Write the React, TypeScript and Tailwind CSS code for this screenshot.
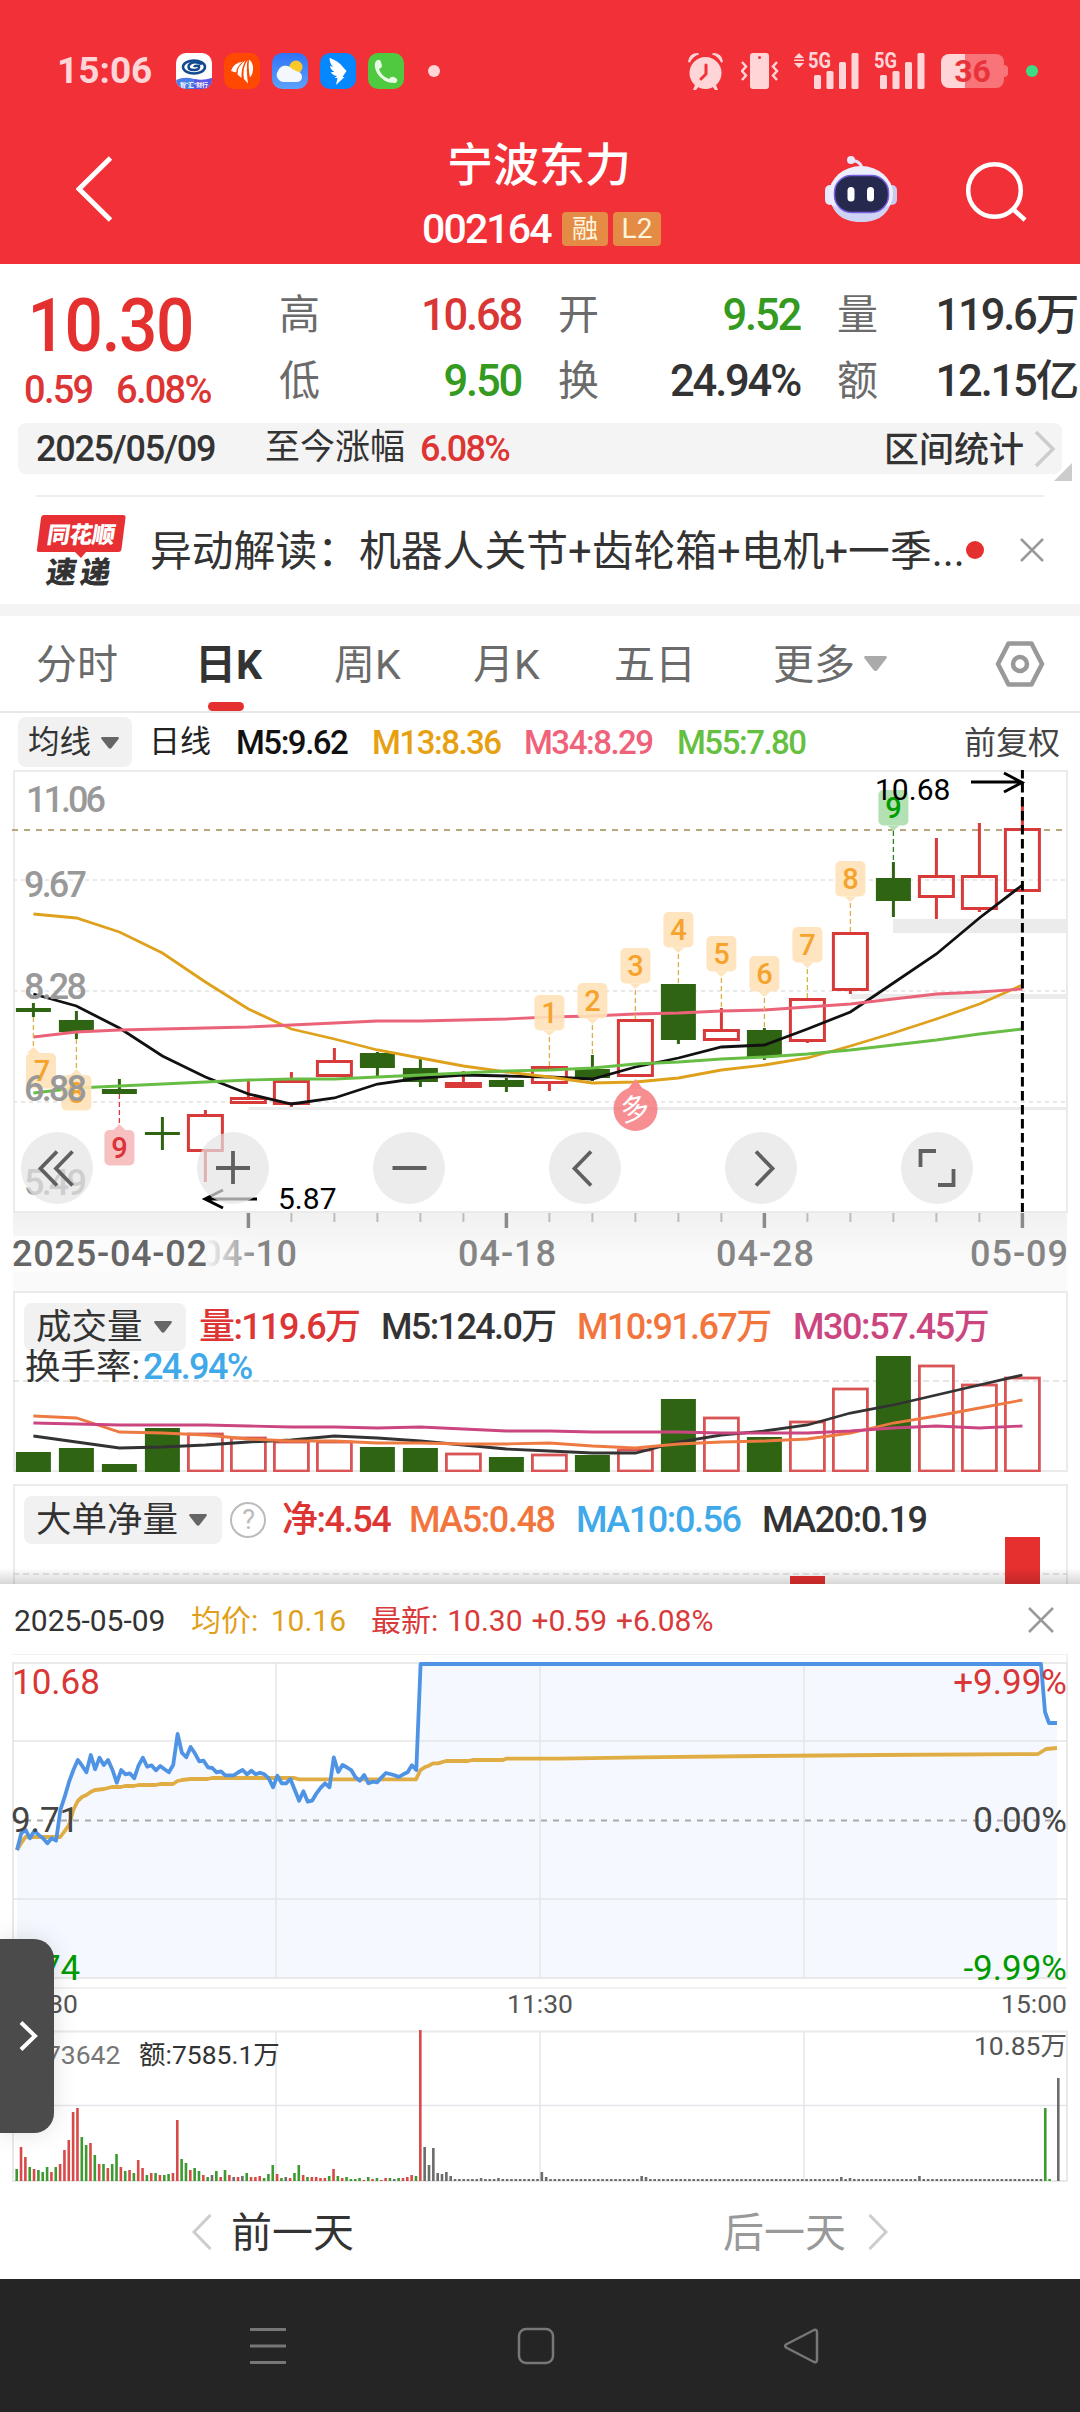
import type { ReactNode } from "react";

const PITCH = 43;
const cx = (i: number) => 33.4 + PITCH * i;
const line = (ys: number[]) => ys.map((y, i) => `${cx(i)},${y}`).join(" ");

type Candle = [up: number, high: number, top: number, bottom: number, low: number];

const candles: Candle[] = [
	[0, 1003, 1008, 1012, 1017],
	[0, 1011, 1020, 1032, 1039],
	[0, 1079, 1089, 1094, 1094],
	[0, 1117, 1132, 1135, 1150],
	[1, 1110, 1114, 1152, 1182],
	[1, 1081, 1097, 1104, 1104],
	[1, 1072, 1080, 1105, 1107],
	[1, 1048, 1060, 1077, 1077],
	[0, 1052, 1053, 1068, 1076],
	[0, 1059, 1068, 1082, 1087],
	[1, 1071, 1082, 1088, 1088],
	[0, 1078, 1080, 1087, 1092],
	[1, 1066, 1066, 1084, 1091],
	[0, 1055, 1069, 1078, 1081],
	[1, 1019, 1019, 1077, 1077],
	[0, 984, 984, 1040, 1044],
	[1, 1008, 1029, 1041, 1041],
	[0, 1028, 1030, 1057, 1060],
	[1, 998, 998, 1042, 1043],
	[1, 932, 932, 991, 994],
	[0, 862, 878, 901, 917],
	[1, 838, 875, 898, 919],
	[1, 823, 875, 910, 912],
	[1, 800, 828, 892, 892],
];

const ma5 = [994, 1006, 1028, 1056, 1077, 1094, 1104, 1098, 1084, 1078, 1075, 1076, 1077, 1079, 1067, 1058, 1047, 1045, 1029, 1012, 983, 954, 918, 885];
const ma13 = [914, 918, 932, 953, 982, 1009, 1029, 1039, 1050, 1058, 1066, 1072, 1077, 1083, 1082, 1078, 1070, 1065, 1058, 1046, 1033, 1019, 1004, 985];
const ma34 = [1037, 1032, 1030, 1029, 1028, 1027, 1025, 1023, 1021, 1021, 1020, 1019, 1017, 1016, 1014, 1013, 1011, 1010, 1007, 1004, 999, 994, 992, 989];
const ma55 = [1093, 1088, 1086, 1084, 1082, 1080, 1079, 1079, 1077, 1075, 1073, 1071, 1070, 1068, 1064, 1062, 1059, 1057, 1054, 1050, 1045, 1040, 1034, 1029];

const volTops = [1452, 1448, 1464, 1428, 1433, 1437, 1441, 1441, 1447, 1448, 1453, 1457, 1454, 1455, 1449, 1399, 1417, 1437, 1421, 1388, 1356, 1365, 1384, 1377];
const vol5 = [1436, 1442, 1448, 1447, 1445, 1442, 1440, 1436, 1438, 1441, 1445, 1449, 1451, 1453, 1453, 1442, 1435, 1431, 1425, 1413, 1405, 1395, 1385, 1375];
const vol10 = [1416, 1418, 1432, 1433, 1435, 1439, 1441, 1441, 1443, 1443, 1444, 1444, 1443, 1446, 1448, 1444, 1442, 1441, 1439, 1433, 1423, 1416, 1408, 1400];
const vol30 = [1423, 1424, 1425, 1425, 1425, 1426, 1427, 1427, 1428, 1427, 1429, 1431, 1431, 1432, 1432, 1432, 1433, 1433, 1433, 1431, 1428, 1426, 1428, 1426];

// [candle index, count, top of the tag, end of the leader line]
const tags: [number, number, number, number][] = [
	[12, 1, 995, 1066],
	[13, 2, 983, 1055],
	[14, 3, 948, 1019],
	[15, 4, 912, 984],
	[16, 5, 936, 1008],
	[17, 6, 956, 1028],
	[18, 7, 927, 998],
	[19, 8, 861, 932],
];

// one value a minute, three units to the pixel
const minutes = [
	690, 640, 630, 655, 632, 645, 655, 670, 655, 662, 570, 530, 485, 450, 420, 437, 457, 405, 448, 413, 435, 420, 450, 488, 450, 463, 460, 475, 437, 413, 440, 436, 451, 438, 448, 457, 435, 342, 398, 412, 381, 400, 424, 422, 442, 444, 457, 454,
	466, 466, 466, 457, 450, 463, 452, 463, 458, 463, 475, 502, 467, 490, 490, 477, 510, 542, 514, 545, 542, 520, 503, 490, 502, 412, 456, 435, 442, 450, 472, 482, 465, 490, 485, 487, 472, 459, 462, 466, 471, 463, 457, 436, 450,
];
const mx = (i: number) => 17 + 4.34 * i;
const priceLine =
	minutes.map((v, i) => `${mx(i).toFixed(1)},${(1620 + v / 3).toFixed(1)}`).join(" ") +
	" 420.6,1664 1041,1664 1045,1712 1049,1723 1057,1723";
const avgLine =
	"17,1850 21.3,1843 25.5,1837 60.3,1837 64.7,1831 69,1825 73.3,1810 77.8,1801 82,1797 86.4,1795 90.6,1792 95,1790 104,1789 112,1787 121,1787 125,1786 134,1786 138.4,1785 155.6,1785 160,1784 173,1784 177.5,1781 182,1780 190.4,1779 207.6,1779 212,1778 294.5,1778 299,1779.3 416,1779.3 420.5,1770 424.6,1767.3 429,1765.7 433,1763.3 438,1763.3 446,1761 468,1761 472.5,1760 503,1760 506,1758.7 560,1758.7 640,1757.3 760,1756 880,1755 1038,1754 1046,1749 1057,1748";

const trades =
	"g12 r34 r24 g14 r12 g11 g9 g14 r9 g14 r17 r31 r41 r69 r73 g44 g36 r38 g26 r17 g17 r13 g17 g27 r14 g10 r11 g8 r21 r13 g6 r8 g8 r6 g6 g7 r8 r61 g22 g18 r11 g13 g10 r6 g4 k6 g10 r4 g11 r6 k4 r4 k5 g8 r4 r4 r5 g3 g7 g16 r7 g3 k4 r3 g8 g16 r6 g4 r4 r4 r3 r3 g5 r12 g5 r3 g4 g2 g2 g3 r1 g4 r2 g3 r1 r3 g3 k2 g3 r3 r4 r6 g5 r151 k34 k16 k33 k8 k7 k9 k5".split(
		" ",
	);
const lateTrades: Record<number, string> = {
	107: "k3",
	111: "k3",
	121: "k9",
	122: "k4",
	144: "k5",
	145: "k4",
	190: "k4",
	192: "k3",
	208: "k5",
	237: "g73",
	238: "g2",
	239: "k0",
	240: "k103",
};
for (let i = trades.length; i <= 240; i++) trades.push(lateTrades[i] ?? "k2");
const tradeColor: Record<string, string> = { r: "#d84a48", g: "#3d9a30", k: "#6c6c6c" };

const Caret = ({ className }: { className: string }) => (
	<svg viewBox="0 0 18 12" className={className}>
		<path d="M1 0h16q1.500 .5 .5 2l-7 9q-1.500 1.500-3 0l-7-9q-1-1.500 .5-2z" fill="currentColor" />
	</svg>
);

const Signal = () => (
	<svg viewBox="0 0 52 38" className="h-[38px] w-[52px] overflow-visible" fill="#ffd5d7">
		<text x="0" y="16" fontSize="22" fontWeight="700" textLength="23" lengthAdjust="spacingAndGlyphs">
			5G
		</text>
		<rect x="6" y="23" width="7" height="14" rx="1.500" />
		<rect x="18.500" y="19" width="7" height="18" rx="1.500" />
		<rect x="31" y="10" width="7" height="27" rx="1.500" />
		<rect x="43.500" y="1" width="7" height="36" rx="1.500" />
	</svg>
);

const StatusBar = () => (
	<div className="flex h-[141px] items-center text-[#ffd5d7]">
		<div className="ml-[57px] w-[119px] text-[37px] font-bold">15:06</div>
		<div className="flex gap-3">
			<svg viewBox="0 0 36 36" className="size-9 rounded-[10px]">
				<rect width="36" height="36" fill="#fff" />
				<path d="M0 27q9-4 18-1t18-1v11H0z" fill="#4a7de8" />
				<path d="M18 26q9 2 18-1v11H18z" fill="#5b55e0" />
				<ellipse cx="18" cy="14" rx="11" ry="6.500" fill="none" stroke="#13498f" strokeWidth="2.500" />
				<path d="M26 11q-9-4-13 1-2 5 5 5 6 0 5-4-4-1-5 1" fill="none" stroke="#13498f" strokeWidth="2.500" />
				<text x="4" y="34" fontSize="6" fontWeight="700" fill="#fff" textLength="28">
					智“汇”财行
				</text>
			</svg>
			<svg viewBox="0 0 36 36" className="size-9 rounded-[10px]">
				<rect width="36" height="36" fill="#ff4800" />
				<path d="M19 8.500Q9 10 7 18l5 1.500Q13 13 19 8.500z" fill="#fff" />
				<path d="M21.500 7.500Q13 13 13.500 21.500l4 3.500Q17 15 21.500 7.500z" fill="#fff" />
				<path d="M23.500 7Q18 15 20 26l4 4.500Q22 16 23.500 7z" fill="#fff" />
				<path d="M25 6.500q-1 8 1 18 3.500-4 3-11-1-5-4-7z" fill="#fff" />
			</svg>
			<svg viewBox="0 0 36 36" className="size-9 rounded-[10px]">
				<defs>
					<linearGradient id="sky" x1="0" y1="0" x2="0" y2="1">
						<stop offset="0" stopColor="#3073f7" />
						<stop offset="1" stopColor="#5ba2fb" />
					</linearGradient>
				</defs>
				<rect width="36" height="36" fill="url(#sky)" />
				<circle cx="24" cy="14" r="6.500" fill="#fbc928" />
				<path d="M12 29a7 7 0 0 1-6-11 8 8 0 0 1 14-2 9 9 0 0 1 4 2q6 1 6 6t-6 5z" fill="#f4f7fd" />
			</svg>
			<svg viewBox="0 0 36 36" className="size-9 rounded-[10px]">
				<rect width="36" height="36" fill="#0587ff" />
				<path d="M10 5q8 3 12 8l4.500 5-4 6h2L16 32l1.500-7h-3l2.500-2q-5-1-6-4l3.500 0q-4.500-3-4.500-6l3 1q-3.500-4-3.500-9z" fill="#fff" />
			</svg>
			<svg viewBox="0 0 36 36" className="size-9 rounded-[10px]">
				<rect width="36" height="36" fill="#4fc93f" />
				<path d="M8 8q4-3 5 1l1 4q0 2-3 3 2 7 10 10 2-3 5-2l3 2q1 3-2 4-12 0-18-10-4-8-1-12z" fill="#e9f9e7" />
			</svg>
		</div>
		<div className="ml-6 size-3 rounded-full bg-[#ffd5d7]" />
		<svg viewBox="0 0 38 38" className="ml-[247px] h-[38px] w-[38px]" fill="#ffd5d7">
			<circle cx="18.500" cy="21" r="16" />
			<path d="M8 33l-2 5h3l3-4zM29 33l2 5h-3l-3-4z" />
			<path d="M1 10Q2 1 11 1l1 1.500Q6 4 3 10.500zM36 10Q35 1 26 1l-1 1.500Q31 4 34 10.500z" />
			<path d="M19 13v9l-5 5" fill="none" stroke="#f23037" strokeWidth="3" strokeLinecap="round" />
		</svg>
		<svg viewBox="0 0 38 38" className="ml-[16px] h-[38px] w-[38px]">
			<rect x="9" y="1" width="19" height="36" rx="3" fill="#ffd5d7" />
			<circle cx="18.500" cy="5.500" r="1.500" fill="#f23037" />
			<path d="M1 10l4 4.500-4 4.500 4 4.500-4 4.500M36 10l-4 4.500 4 4.500-4 4.500 4 4.500" fill="none" stroke="#ffd5d7" strokeWidth="2.500" />
		</svg>
		<svg viewBox="0 0 12 38" className="ml-[14px] mr-[3px] h-[38px] w-3" fill="#ffd5d7">
			<path d="M6 1l5 5H1zM1 7.500h10v1.500H1zM6 16l5-5H1z" />
		</svg>
		<Signal />
		<div className="w-[14px]" />
		<Signal />
		<div className="ml-[15px] flex h-[34px] w-[63px] items-center justify-center rounded-[8px] bg-gradient-to-r from-[#ffd5d7] from-38% to-[#f97479] to-38% text-[32px] font-bold leading-[34px] text-[#e9333b]">
			36
		</div>
		<div className="h-3 w-1 rounded-r bg-[#f97479]" />
		<div className="ml-[18px] size-3 rounded-full bg-[#3ddc84]" />
	</div>
);

const Header = () => (
	<header className="h-[264px] bg-[#f23037] text-white">
		<StatusBar />
		<div className="-mt-[3px] flex h-[122px] items-start">
			<svg viewBox="76 155 40 68" className="ml-[76px] mt-[17px] h-[68px] w-10" fill="none" stroke="#fff" strokeWidth="5">
				<path d="M110.500 158L79 189l31.500 31" />
			</svg>
			<div className="ml-[305px] flex w-[240px] flex-col">
				<div className="pl-[26px] pt-[2px] text-[46px] font-medium leading-[50px]">宁波东力</div>
				<div className="mt-[21px] flex h-[36px] items-center">
					<span className="w-[141px] pl-px text-[41px] font-medium leading-[36px] tracking-[-0.045em]">002164</span>
					<span className="flex h-[34px] w-[46px] items-center justify-center rounded bg-[#e48b46] text-[26px] leading-[34px] text-[#fff4dc]">融</span>
					<span className="ml-[5px] flex h-[34px] w-12 items-center justify-center rounded bg-[#e48b46] text-[28px] leading-[34px] text-[#fff4dc]">L2</span>
				</div>
			</div>
			<svg viewBox="824 154 76 70" className="ml-[163px] mt-[16px] h-[70px] w-[76px]">
				<path d="M851 161q6-1 9 3t2 6" fill="none" stroke="#e3e0f8" strokeWidth="3" />
				<circle cx="851" cy="160" r="4" fill="#e9e8fb" />
				<rect x="825" y="185" width="10" height="20" rx="5" fill="#e7e8fb" />
				<rect x="887" y="185" width="10" height="20" rx="5" fill="#c9caf0" />
				<ellipse cx="861" cy="194" rx="32" ry="28" fill="#eceefd" />
				<path d="M832 205q29 14 58 0-6 17-29 17t-29-17z" fill="#cfd3f3" />
				<rect x="834.500" y="175.500" width="54" height="37" rx="17" fill="#26294e" stroke="#7a5fe0" strokeWidth="1.500" />
				<rect x="847.500" y="187" width="7" height="14.500" rx="3.500" fill="#fff" />
				<rect x="867" y="187" width="7" height="14.500" rx="3.500" fill="#fff" />
			</svg>
			<svg viewBox="964 160 64 64" className="ml-[64px] mt-[22px] size-16" fill="none" stroke="#fff" strokeWidth="4.500">
				<circle cx="994.500" cy="190.500" r="26.300" />
				<path d="M1013 209l12 11" />
			</svg>
		</div>
	</header>
);

const Stat = ({ label, value, className }: { label: string; value: ReactNode; className: string }) => (
	<div className="flex items-center justify-between whitespace-nowrap">
		<span className="text-[41px] text-[#6b6b6b]">{label}</span>
		<span className={`text-[43.500px] font-medium tracking-[-0.05em] ${className}`}>{value}</span>
	</div>
);

const Quote = () => (
	<section className="h-[352px] border-b-12 border-[#f4f4f4]">
		<div className="flex h-[159px] text-[#333]">
			<div className="w-[279px] pl-[24px] pt-[22px] text-[#dd3434]">
				<div className="h-[78px] origin-left scale-x-90 pl-1 text-[75px] font-medium leading-[78px] tracking-[-0.02em] text-[#e53030]">10.30</div>
				<div className="mt-[4px] flex whitespace-nowrap text-[38px] font-medium leading-[44px] tracking-[-0.045em]">
					<span className="w-[92px]">0.59</span>
					<span>6.08%</span>
				</div>
			</div>
			<div className="grid w-[242px] grid-rows-[66px_66px] pt-[19px]">
				<Stat label="高" value="10.68" className="text-[#d93636]" />
				<Stat label="低" value="9.50" className="text-[#349a20]" />
			</div>
			<div className="ml-[37px] grid w-[242px] grid-rows-[66px_66px] pt-[19px]">
				<Stat label="开" value="9.52" className="text-[#349a20]" />
				<Stat label="换" value="24.94%" className="" />
			</div>
			<div className="ml-[37px] grid w-[240px] grid-rows-[66px_66px] pt-[19px]">
				<Stat label="量" value="119.6万" className="" />
				<Stat label="额" value="12.15亿" className="" />
			</div>
		</div>
		<div className="relative mx-[18px] flex h-[51px] items-center whitespace-nowrap rounded-lg bg-[#f4f4f4] pl-[18px] text-[#333]">
			<span className="w-[229px] text-[36px] font-medium tracking-[-0.035em]">2025/05/09</span>
			<span className="w-[155px] text-[35px]">至今涨幅</span>
			<span className="text-[36px] font-medium tracking-[-0.05em] text-[#dd3434]">6.08%</span>
			<span className="ml-auto mt-1.5 text-[35px] font-medium">区间统计</span>
			<svg viewBox="0 0 22 36" className="ml-[10px] mr-[6px] h-9 w-[22px]" fill="none" stroke="#ccc" strokeWidth="3.500">
				<path d="M2 1l17 17L2 35" />
			</svg>
			<svg viewBox="0 0 18 18" className="absolute -right-[10px] -bottom-[7px] size-[18px]">
				<path d="M18 0v18H0z" fill="#ccc" />
			</svg>
		</div>
		<div className="mx-9 mt-[21px] flex h-[108px] items-center border-t-2 border-[#eeeeee]">
			<svg viewBox="36 512 92 76" className="mt-[1px] h-[76px] w-[92px]">
				<path d="M44 514h79q3 0 2.500 3l-4 31q-.5 3-3 3H86l-5 6-6-6H39q-3 0-2-3l4-31q.5-3 3-3z" fill="#e63033" />
				<g fontWeight="900" fontFamily="'Noto Sans CJK SC', sans-serif" lengthAdjust="spacingAndGlyphs">
					<text transform="translate(46 541.500) skewX(-9)" fontSize="23" fill="#fff" textLength="68">
						同花顺
					</text>
					<text transform="translate(45 582) skewX(-9)" fontSize="30" fill="#333" textLength="64">
						速递
					</text>
				</g>
			</svg>
			<span className="ml-[22px] mt-1 w-[816px] whitespace-nowrap text-[41.800px] text-[#333]">异动解读：机器人关节+齿轮箱+电机+一季...</span>
			<span className="size-[18px] shrink-0 rounded-full bg-[#e53030]" />
			<svg viewBox="0 0 24 24" className="ml-[36px] size-6 shrink-0" stroke="#999" strokeWidth="2.500">
				<path d="M1 1l22 22M23 1L1 23" />
			</svg>
		</div>
	</section>
);

const Tabs = () => (
	<nav className="flex h-[97px] items-center border-b-2 border-[#e8e8e8] text-[41px] text-[#6b6b6b]">
		<span className="ml-[36px] mt-1 w-[159px]">分时</span>
		<span className="relative flex h-full w-[139px] items-center pt-1 font-bold text-[#333]">
			日K
			<span className="absolute bottom-0 left-[13px] h-[9px] w-9 rounded-full bg-[#e53030]" />
		</span>
		<span className="mt-1 w-[139px]">周K</span>
		<span className="mt-1 w-[141px]">月K</span>
		<span className="mt-1 w-[159px]">五日</span>
		<span className="mt-1 w-[91px]">更多</span>
		<Caret className="w-[23px] text-[#aaa]" />
		<svg viewBox="994 638 52 52" className="ml-[107px] size-[52px]" fill="none" stroke="#999" strokeWidth="4.500" strokeLinejoin="round">
			<path d="M1008.500 643.500h23l10.500 20.500-10.500 20.500h-23L998 664z" />
			<circle cx="1020" cy="664" r="7" />
		</svg>
	</nav>
);

const MaLegend = () => (
	<div className="flex h-[57px] items-center whitespace-nowrap text-[33px] font-medium tracking-[-0.045em]">
		<span className="ml-[18px] flex h-[50px] w-[114px] items-center rounded-lg bg-[#f1f1f1] pl-[10px] pt-0.5 text-[31.500px] font-normal tracking-normal text-[#333]">
			均线
			<Caret className="ml-[10px] w-[18px] text-[#666]" />
		</span>
		<span className="ml-[17px] mt-0.5 w-[87px] text-[31px] font-normal tracking-normal text-[#222]">日线</span>
		<span className="mt-0.5 w-[136px] text-[#111]">M5:9.62</span>
		<span className="mt-0.5 w-[152px] text-[#e6a010]">M13:8.36</span>
		<span className="mt-0.5 w-[153px] text-[#f0617a]">M34:8.29</span>
		<span className="mt-0.5 text-[#66c040]">M55:7.80</span>
		<span className="ml-auto mr-[20px] mt-0.5 text-[32px] font-normal tracking-normal text-[#444]">前复权</span>
	</div>
);

const Tag = ({ x, y, n, bg, fg, up }: { x: number; y: number; n: number; bg: string; fg: string; up?: boolean }) => (
	<g transform={`translate(${x} ${y})`}>
		<rect x="-15" width="30" height="35.500" rx="5" fill={bg} />
		<path d={up ? "M-6 0L0-6 6 0z" : "M-6 35.500L0 41l6-5.500z"} fill={bg} />
		<text y="28" fontSize="29" fontWeight="500" textAnchor="middle" fill={fg}>
			{n}
		</text>
	</g>
);

const axisLabel = { fontSize: 36, fontWeight: 500, lengthAdjust: "spacingAndGlyphs" } as const;

const KChart = () => (
	<svg viewBox="0 770 1080 521" className="block h-[521px] w-full">
		<defs>
			<linearGradient id="axis" x1="0" y1="0" x2="0" y2="1">
				<stop offset="0" stopColor="#f1f1f1" />
				<stop offset=".6" stopColor="#fafafa" />
			</linearGradient>
			<linearGradient id="fade">
				<stop offset="0" stopColor="#fdfdfd" />
				<stop offset=".78" stopColor="#fafafa" />
				<stop offset="1" stopColor="#fafafa" stopOpacity="0" />
			</linearGradient>
		</defs>
		<rect x="14" y="771" width="1053" height="441" fill="none" stroke="#ebebeb" strokeWidth="2" />
		<path d="M13 880H1067M13 991H1067M13 1102H1067" stroke="#e9e9e9" strokeWidth="2" strokeDasharray="4 4" />
		<path d="M12 830H1067" stroke="#b9a67c" strokeWidth="2" strokeDasharray="6 6" />
		<path d="M893 919h174v14H893zM850.600 994h216.400v5H850.600zM248.600 1107h818.400v3H248.600z" fill="#ebebeb" />
		{candles.map(([up, high, top, bottom, low], i) =>
			up ? (
				<g key={i} stroke="#d83a3a" strokeWidth="3" fill="none">
					<path d={`M${cx(i)} ${high}V${top}M${cx(i)} ${bottom}V${low}`} />
					<rect x={cx(i) - 17} y={top + 1.5} width="34" height={bottom - top - 3} fill={i === 10 ? "#e53030" : "none"} />
				</g>
			) : (
				<g key={i} fill="#2f6512">
					<rect x={cx(i) - 1.5} y={high} width="3" height={low - high} />
					<rect x={cx(i) - 17.5} y={top} width="35" height={bottom - top} />
				</g>
			),
		)}
		<g fill="none" strokeWidth="2.800">
			<polyline points={line(ma5)} stroke="#111" />
			<polyline points={line(ma13)} stroke="#dfa11c" />
			<polyline points={line(ma34)} stroke="#eb6378" />
			<polyline points={line(ma55)} stroke="#68bd45" />
		</g>
		{tags.map(([i, n, y, end]) => (
			<g key={i}>
				<path d={`M${cx(i)} ${y + 42}V${end}`} stroke="#dcae4a" strokeWidth="1.300" strokeDasharray="5 3" />
				<Tag x={cx(i)} y={y} n={n} bg="#ffe2b8e6" fg="#f5a32c" />
			</g>
		))}
		<path d="M33.400 1017V1047M76.400 1039V1069" stroke="#dcae4a" strokeWidth="1.300" strokeDasharray="5 3" />
		<path d="M119.400 1094V1124" stroke="#d83a3a" strokeWidth="1.300" strokeDasharray="5 3" />
		<path d="M893.400 831V862" stroke="#1d8a1d" strokeWidth="1.300" strokeDasharray="5 3" />
		<rect x="26" y="1053" width="30" height="35.500" rx="5" fill="#ffe2b8e6" />
		<path d="M27.400 1053l6-6 6 6z" fill="#ffe2b8" />
		<text x="42" y="1081" fontSize="29" fontWeight="500" textAnchor="middle" fill="#f5a32c">
			7
		</text>
		<Tag x={76.4} y={1075} n={8} bg="#ffe2b8e6" fg="#f5a32c" up />
		<Tag x={119.4} y={1130} n={9} bg="#f7c1c2" fg="#dc3238" up />
		<Tag x={893.4} y={790} n={9} bg="#b3e1b3" fg="#009c00" />
		<circle cx="635.500" cy="1109" r="22" fill="#f46a6ec0" />
		<path d="M628 1089l7.500-10 7.500 10z" fill="#f7888b" />
		<text fontSize="29" fill="#fff" textAnchor="middle" transform="translate(637 1119) rotate(-12)">
			多
		</text>
		<g {...axisLabel} fill="#999">
			<text x="26" y="812" textLength="80">11.06</text>
			<text x="24" y="897" textLength="63">9.67</text>
			<text x="24" y="999" textLength="63">8.28</text>
			<text x="24" y="1101" textLength="63">6.88</text>
			<text x="24" y="1195" textLength="63">5.49</text>
		</g>
		<g fontSize="30">
			<text x="875" y="800">10.68</text>
			<text x="278" y="1209">5.87</text>
		</g>
		<g fill="none" stroke="#000" strokeWidth="3">
			<path d="M971 782h51M1004 773l18 9.500-18 9.500M257 1199h-51M223 1190l-18 9 18 9" />
			<path d="M1022.400 769V1212" strokeDasharray="9.500 4.500" />
		</g>
		{[57, 233, 409, 585, 761, 937].map((x) => (
			<circle key={x} cx={x} cy="1168" r="36" fill="#e4e4e4" opacity=".7" />
		))}
		<g fill="none" stroke="#606060" strokeWidth="3.800">
			<path d="M57 1151.500L40.500 1168.500 57 1185.500M72.500 1151.500L56 1168.500l16.500 17" />
			<path d="M216 1168h34M233 1151v33M392.500 1168h34" />
			<path d="M591 1151.500l-16.500 17 16.500 17M756 1151.500l16.500 17-16.500 17" />
			<path d="M936 1151h-15.500v16M938 1185h15.500v-16" />
		</g>
		<rect x="13" y="1213" width="1054" height="78" fill="url(#axis)" />
		{candles.map((_, i) => {
			const major = i % 6 === 5;
			return i < 5 ? null : <path key={i} d={`M${cx(i)} 1213v${major ? 15 : 9}`} stroke={major ? "#8a8a8a" : "#bdbdbd"} strokeWidth={major ? 3.5 : 2} />;
		})}
		<g {...axisLabel} fill="#858585">
			<text x="201" y="1266" textLength="96">04-10</text>
			<rect x="13" y="1236" width="245" height="36" fill="url(#fade)" />
			<text x="12" y="1266" textLength="195" fill="#666">2025-04-02</text>
			<text x="458" y="1266" textLength="98">04-18</text>
			<text x="716" y="1266" textLength="98">04-28</text>
			<text x="970" y="1266" textLength="98">05-09</text>
		</g>
	</svg>
);

const VolumeChart = () => (
	<section className="relative h-[181px] whitespace-nowrap text-[36px] font-medium tracking-[-0.045em] text-[#333]">
		<svg viewBox="0 1291 1080 181" className="absolute inset-0 h-full w-full">
			<rect x="14" y="1292" width="1053" height="179" fill="none" stroke="#ebebeb" strokeWidth="2" />
			<path d="M13 1381H1067" stroke="#dedede" strokeWidth="1.500" strokeDasharray="6 4" />
			{volTops.map((y, i) =>
				candles[i][0] ? (
					<rect key={i} x={cx(i) - 17} y={y + 1} width="34" height={1470 - y} fill="none" stroke="#d95454" strokeWidth="2.800" />
				) : (
					<rect key={i} x={cx(i) - 17.5} y={y} width="35" height={1472 - y} fill="#2f6512" />
				),
			)}
			<g fill="none" strokeWidth="2.800">
				<polyline points={line(vol5)} stroke="#333" />
				<polyline points={line(vol10)} stroke="#ee7a42" />
				<polyline points={line(vol30)} stroke="#cb4680" />
			</g>
		</svg>
		<div className="relative flex h-[60px] items-center pt-3 leading-[48px]">
			<span className="ml-6 flex h-12 w-[162px] items-center rounded-lg bg-[#f1f1f1] pl-3 text-[35.500px] font-normal tracking-normal">
				成交量
				<Caret className="ml-[11px] w-[18px] text-[#666]" />
			</span>
			<span className="ml-[13px] w-[182px] text-[#dd3434]">量:119.6万</span>
			<span className="w-[196px]">M5:124.0万</span>
			<span className="w-[216px] text-[#f2753d]">M10:91.67万</span>
			<span className="tracking-[-0.04em] text-[#cb4680]">M30:57.45万</span>
		</div>
		<div className="relative flex h-8 items-center pl-[25px] leading-8">
			<span className="w-[118px] text-[35.500px] font-normal tracking-normal">换手率:</span>
			<span className="text-[#3fa9ea]">24.94%</span>
		</div>
	</section>
);

const NetChart = () => (
	<section className="relative mt-3 h-[100px] whitespace-nowrap text-[36px] font-medium tracking-[-0.04em] text-[#333]">
		<svg viewBox="0 1484 1080 100" className="absolute inset-0 h-full w-full">
			<defs>
				<linearGradient id="shade" x1="0" y1="0" x2="0" y2="1">
					<stop offset="0" stopColor="#000" stopOpacity="0" />
					<stop offset="1" stopColor="#000" stopOpacity=".16" />
				</linearGradient>
			</defs>
			<path d="M14 1584V1485H1067V1584" fill="none" stroke="#ebebeb" strokeWidth="2" />
			<path d="M13 1574H1067" stroke="#dedede" strokeWidth="1.500" strokeDasharray="6 4" />
			<path d="M790 1576h35v8h-35zM1005 1537h35v47h-35z" fill="#e63030" />
			<rect y="1568" width="1080" height="16" fill="url(#shade)" />
		</svg>
		<div className="relative flex h-[60px] items-center pt-3 leading-[48px]">
			<span className="ml-6 flex h-12 w-[198px] items-center rounded-lg bg-[#f1f1f1] pl-3 text-[35.500px] font-normal tracking-normal">
				大单净量
				<Caret className="ml-[11px] w-[18px] text-[#666]" />
			</span>
			<span className="ml-2 flex size-9 items-center justify-center rounded-full border-[2.500px] border-[#bbb] text-[27px] font-normal leading-none text-[#bbb]">?</span>
			<span className="ml-[16px] w-[127px] text-[#dd3434]">净:4.54</span>
			<span className="w-[167px] text-[#f2753d]">MA5:0.48</span>
			<span className="w-[186px] text-[#3fa9ea]">MA10:0.56</span>
			<span>MA20:0.19</span>
		</div>
	</section>
);

const Intraday = () => (
	<section className="relative h-[695px] bg-white">
		<div className="flex h-[70px] items-center whitespace-nowrap pt-[2px] text-[30px] text-[#333]">
			<span className="ml-[14px] w-[177px]">2025-05-09</span>
			<span className="w-[180px] text-[#dfa11c] [word-spacing:5px]">均价: 10.16</span>
			<span className="text-[#d93a3a] [word-spacing:1.500px]">最新: 10.30 +0.59 +6.08%</span>
			<svg viewBox="0 0 26 26" className="ml-auto mr-[26px] size-[26px]" stroke="#999" strokeWidth="2.500">
				<path d="M1 1l24 24M25 1L1 25" />
			</svg>
		</div>
		<svg viewBox="0 1654 1080 531" className="block h-[531px] w-full">
			<polygon points={`17,1978 ${priceLine} 1057,1978`} fill="#f5f8fe" />
			<path d="M12 1654H1067V1662M12 1988H1067" fill="none" stroke="#f2f2f2" strokeWidth="2" />
			<path d="M13 1663H1067V1978H13zM13 2031.500H1067V2181H13z" fill="none" stroke="#e9e9e9" strokeWidth="2" />
			<path d="M13 1741H1067M13 1899H1067M276 1663V1978M540 1663V1978M804 1663V1978M276 2031V2181M540 2031V2181M804 2031V2181M13 2105.500H1067" stroke="#e4e6e9" strokeWidth="1.500" />
			<path d="M13 1820.500H1067" stroke="#aaa" strokeWidth="2" strokeDasharray="6 6" />
			<g fill="none" strokeWidth="3.800" strokeLinejoin="round">
				<polyline points={avgLine} stroke="#e0ad45" />
				<polyline points={priceLine} stroke="#4f93e4" />
			</g>
			<g fontSize="35">
				<text x="12" y="1694" fill="#d93636">10.68</text>
				<text x="11" y="1832" fill="#444">9.71</text>
				<text x="12" y="1980" fill="#009a00">8.74</text>
				<g textAnchor="end">
					<text x="1067" y="1694" fill="#d93636">+9.99%</text>
					<text x="1067" y="1832" fill="#444">0.00%</text>
					<text x="1067" y="1980" fill="#009a00">-9.99%</text>
				</g>
			</g>
			<g fontSize="26.500" fill="#555">
				<text x="12" y="2013">09:30</text>
				<text x="540" y="2013" textAnchor="middle">11:30</text>
				<text x="1067" y="2013" textAnchor="end">15:00</text>
				<text x="13" y="2064" fill="#777">量:73642</text>
				<text x="139" y="2064" fill="#333">额:7585.1万</text>
				<text x="1067" y="2055" textAnchor="end">10.85万</text>
			</g>
			{trades.map((t, i) => {
				const h = Number(t.slice(1));
				return <rect key={i} x={mx(i) - 1.6} y={2181 - h} width="2.600" height={h} fill={tradeColor[t[0]]} />;
			})}
		</svg>
		<div className="flex h-[94px] items-center text-[41px]">
			<svg viewBox="0 0 20 36" className="ml-[192px] h-9 w-5" fill="none" stroke="#ccc" strokeWidth="3">
				<path d="M18.500 1L2 18l16.500 17" />
			</svg>
			<span className="ml-[19px] mt-1 w-[492px] text-[#333]">前一天</span>
			<span className="mt-1 text-[#999]">后一天</span>
			<svg viewBox="0 0 20 36" className="ml-[22px] h-9 w-5" fill="none" stroke="#ccc" strokeWidth="3">
				<path d="M1.500 1L18 18 1.500 35" />
			</svg>
		</div>
		<div className="absolute left-0 top-[355px] flex h-[194px] w-[54px] items-center rounded-r-[20px] bg-[#4b4b4b] pl-[19px] shadow-[0_0_24px_rgba(0,0,0,0.12)]">
			<svg viewBox="0 0 20 30" className="h-[30px] w-5" fill="none" stroke="#fff" strokeWidth="4">
				<path d="M2 1.500L16 15 2 28.500" />
			</svg>
		</div>
	</section>
);

const NavBar = () => (
	<footer className="flex h-[133px] items-center bg-[#252525]">
		<svg viewBox="0 0 40 40" className="ml-[248px] size-10" fill="none" stroke="#777" strokeWidth="3">
			<path d="M2 3.500h36M2 20h36M2 36.500h36" />
		</svg>
		<svg viewBox="0 0 40 40" className="ml-[228px] size-10" fill="none" stroke="#777" strokeWidth="2.500">
			<rect x="3" y="3" width="34" height="34" rx="7" />
		</svg>
		<svg viewBox="0 0 40 40" className="ml-[226px] size-10" fill="none" stroke="#777" strokeWidth="2.500" strokeLinejoin="round">
			<path d="M4 18.500L32 4q3-1 3 2v28q0 3-3 2L4 21.500q-1.500-1.500 0-3z" />
		</svg>
	</footer>
);

export default function App() {
	return (
		<div className="h-[2412px] w-[1080px] overflow-hidden bg-white font-[Roboto,'Noto_Sans_CJK_SC',sans-serif]">
			<Header />
			<Quote />
			<Tabs />
			<MaLegend />
			<KChart />
			<VolumeChart />
			<NetChart />
			<Intraday />
			<NavBar />
		</div>
	);
}
